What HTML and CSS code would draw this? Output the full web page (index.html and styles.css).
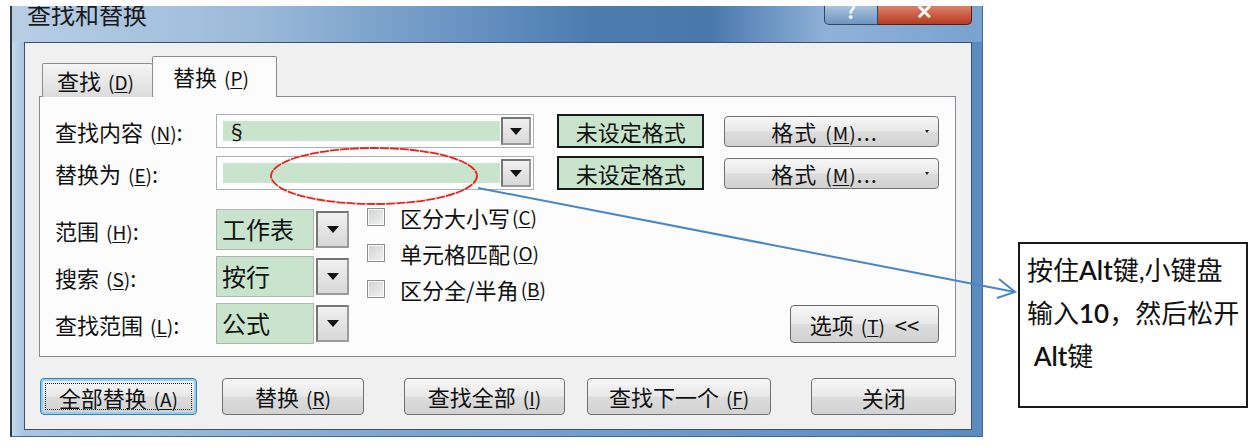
FILE: index.html
```html
<!DOCTYPE html>
<html lang="zh-CN">
<head>
    <meta charset="UTF-8">
    <title>查找和替换</title>
    <link rel="stylesheet" href="styles.css">
</head>
<body>
    <div class="stage">
        <div class="window">
            <div class="titlebar">
                <span class="title">查找和替换</span>
                <div class="caption">
                    <span class="cap help">?</span>
                    <span class="cap close">✕</span>
                </div>
            </div>

            <div class="client">
                <div class="tabs">
                    <span class="tab">查找 <span class="key">(<u>D</u>)</span></span>
                    <span class="tab active">替换 <span class="key">(<u>P</u>)</span></span>
                </div>

                <div class="panel">
                    <div class="row">
                        <label>查找内容 <span class="key">(<u>N</u>)</span>:</label>
                        <div class="combo"><span class="val">§</span><span class="drop"></span></div>
                        <span class="preview">未设定格式</span>
                        <button class="fmt">格式 <span class="key">(<u>M</u>)</span>...<i class="caret"></i></button>
                    </div>
                    <div class="row">
                        <label>替换为 <span class="key">(<u>E</u>)</span>:</label>
                        <div class="combo"><span class="val"></span><span class="drop"></span></div>
                        <span class="preview">未设定格式</span>
                        <button class="fmt">格式 <span class="key">(<u>M</u>)</span>...<i class="caret"></i></button>
                    </div>

                    <div class="options">
                        <div class="selects">
                            <div class="sel-row">
                                <label>范围 <span class="key">(<u>H</u>)</span>:</label>
                                <div class="select"><span class="val">工作表</span><span class="drop"></span></div>
                            </div>
                            <div class="sel-row">
                                <label>搜索 <span class="key">(<u>S</u>)</span>:</label>
                                <div class="select"><span class="val">按行</span><span class="drop"></span></div>
                            </div>
                            <div class="sel-row">
                                <label>查找范围 <span class="key">(<u>L</u>)</span>:</label>
                                <div class="select"><span class="val">公式</span><span class="drop"></span></div>
                            </div>
                        </div>
                        <div class="checks">
                            <label class="check"><span class="box"></span>区分大小写 <span class="key">(<u>C</u>)</span></label>
                            <label class="check"><span class="box"></span>单元格匹配 <span class="key">(<u>O</u>)</span></label>
                            <label class="check"><span class="box"></span>区分全/半角 <span class="key">(<u>B</u>)</span></label>
                        </div>
                        <button class="opt">选项 <span class="key">(<u>T</u>)</span> &nbsp;&lt;&lt;</button>
                    </div>
                </div>

                <div class="actions">
                    <button class="btn focus w-all"><span>全部替换 <span class="key">(<u>A</u>)</span></span></button>
                    <button class="btn w-rep">替换 <span class="key">(<u>R</u>)</span></button>
                    <button class="btn w-findall">查找全部 <span class="key">(<u>I</u>)</span></button>
                    <button class="btn w-next">查找下一个 <span class="key">(<u>F</u>)</span></button>
                    <button class="btn w-close">关闭</button>
                </div>
            </div>
        </div>

        <div class="note">
            按住<b>Alt</b>键,小键盘<br>
            输入<b>10</b>，然后松开<br>
            &nbsp;<b>Alt</b>键
        </div>

        <!-- marcas encima del dialogo: elipse roja y flecha azul -->
        <svg class="overlay" width="1257" height="447" viewBox="0 0 1257 447">
            <ellipse cx="374" cy="176" rx="103" ry="28" fill="none" stroke="#e8231d" stroke-width="1.8" stroke-dasharray="9 1"/>
            <line x1="478" y1="188" x2="1015" y2="292" stroke="#4a86c6" stroke-width="2"/>
            <polyline points="999,279 1015,292 997,298" fill="none" stroke="#4a86c6" stroke-width="2"/>
        </svg>
    </div>
</body>
</html>
```

FILE: styles.css
```css
*{
    box-sizing: border-box;
}

body{
    margin: 0;
    background: #fff;
    font-family: "Noto Sans CJK SC", sans-serif;
    color: #111;
}

.stage{
    position: relative;
    width: 1257px;
    height: 447px;
    display: flex;
    align-items: flex-start;
}

.key{
    font-size: 19px;
    margin-left: 2px;
    u{
        text-underline-offset: 2px;
    }
}

/* ventana */
.window{
    margin: 6px 0 0 10px;
    width: 973px;
    height: 431px;
    display: flex;
    flex-direction: column;
    overflow: hidden;
    background: linear-gradient(90deg, #c6d9ed 0, #a9c5e2 12px, #7fa6d0 40%, #5c8bc0 100%);
    border-left: 2px solid #2e3846;
    border-right: 1px solid #3d6aa0;
    border-bottom: 1px solid #3d6aa0;
}

.titlebar{
    height: 36px;
    flex-shrink: 0;
    display: flex;
    align-items: flex-start;
    background: linear-gradient(90deg, #b8cee5 0%, #9bbad9 25%, #6c96c4 45%, #4c7bb0 60%, #4a78ad 72%, #8fb2d8 84%, #7aa2cf 100%);

    .title{
        font-size: 24px;
        line-height: 24px;
        margin: -4px 0 0 15px;
        color: #1a1a1a;
    }
}

.caption{
    margin-left: auto;
    margin-right: 10px;
    display: flex;
    height: 19px;

    .cap{
        height: 19px;
        color: #fff;
        font-weight: bold;
        font-size: 20px;
        line-height: 10px;
        text-align: center;
        overflow: hidden;
    }
    .help{
        width: 54px;
        color: #f4f7fa;
        background: linear-gradient(#a7c2de, #6f95c0);
        border: 1px solid #33475f;
        border-top: 0;
        border-radius: 0 0 0 5px;
    }
    .close{
        width: 94px;
        background: linear-gradient(#de8068, #b73a22);
        border: 1px solid #5a1d14;
        border-top: 0;
        border-left: 0;
        border-radius: 0 0 5px 0;
    }
}

.client{
    flex: 1;
    margin: 0 10px 6px 12px;
    border: 1px solid #3f5168;
    background: #f0f0f0;
    padding: 14px 15px 14px 14px;
    display: flex;
    flex-direction: column;
}

/* pestañas */
.tabs{
    display: flex;
    align-items: flex-end;
    height: 40px;
    margin-left: 3px;
    margin-bottom: -1px;
    position: relative;
    z-index: 1;

    .tab{
        width: 111px;
        height: 34px;
        border: 1px solid #898c95;
        border-bottom: 0;
        border-radius: 2px 2px 0 0;
        background: linear-gradient(#f4f4f4, #dcdcdc);
        font-size: 22px;
        line-height: 32px;
        padding-left: 14px;
    }
    .active{
        width: 125px;
        height: 41px;
        margin-left: -1px;
        background: #fcfcfc;
        padding-left: 20px;
        line-height: 38px;
    }
}

.panel{
    height: 261px;
    border: 1px solid #898c95;
    background: #fcfcfc;
    padding: 17px 16px 0 15px;
}

label{
    font-size: 22px;
}

.drop{
    width: 30px;
    border: 2px solid #757575;
    border-right-color: #9a9a9a;
    border-bottom-color: #9a9a9a;
    background: linear-gradient(#f0f0f0, #d8d8d8);
    display: flex;
    justify-content: center;
    align-items: center;

    &::after{
        content: "";
        border-left: 6px solid transparent;
        border-right: 6px solid transparent;
        border-top: 7px solid #111;
    }
}

.row{
    display: flex;
    align-items: center;
    height: 34px;
    margin-bottom: 8px;

    > label{
        width: 161px;
    }
}

.combo{
    width: 319px;
    height: 34px;
    border: 1px solid #aeb0b6;
    background: #fff;
    display: flex;
    padding: 2px 2px 2px 6px;

    .val{
        flex: 1;
        background: #c9e4cc;
        margin: 4px 1px 4px 0;
        font-size: 20px;
        line-height: 22px;
        padding-left: 4px;
    }
}

.preview{
    margin-left: 23px;
    width: 147px;
    height: 34px;
    border: 2px solid #1a1a1a;
    background: #c9e4cc;
    font-size: 22px;
    line-height: 30px;
    text-align: center;
}

button{
    font-family: inherit;
    color: #111;
    cursor: pointer;
}

.fmt, .opt, .btn{
    border: 1px solid #707070;
    border-radius: 4px;
    background: linear-gradient(#f7f7f7 0%, #e9e9e9 48%, #dcdcdc 52%, #d2d2d2 100%);
    font-size: 22px;
    padding: 0;
}

.fmt{
    margin-left: 20px;
    width: 215px;
    height: 31px;
    line-height: 28px;
    position: relative;
    padding-right: 14px;
    letter-spacing: 1px;

    .caret{
        position: absolute;
        right: 9px;
        top: 13px;
        border-left: 2px solid transparent;
        border-right: 2px solid transparent;
        border-top: 3px solid #222;
    }
}

.options{
    display: flex;
    margin-top: 19px;
    height: 136px;
}

.sel-row{
    display: flex;
    align-items: center;
    height: 41px;
    margin-bottom: 6px;

    > label{
        width: 161px;
    }
}

.select{
    width: 133px;
    height: 41px;
    display: flex;
    gap: 2px;

    .val{
        flex: 1;
        background: #c9e4cc;
        border: 1px solid #b4b4b4;
        font-size: 24px;
        line-height: 38px;
        padding-left: 5px;
    }
    .drop{
        width: 33px;
        margin: 2px 0;
    }
}

.checks{
    margin-left: 18px;
    margin-top: -4px;
    display: flex;
    flex-direction: column;
    gap: 13px;
}

.check{
    display: flex;
    align-items: center;
    height: 23px;

    .box{
        width: 18px;
        height: 18px;
        border: 1px solid #8e8f8f;
        background: linear-gradient(135deg, #cfd0d1, #f4f4f4);
        box-shadow: inset 0 0 0 1px #f8f8f8;
        margin-right: 15px;
    }
}

.opt{
    margin-left: auto;
    align-self: flex-end;
    margin-bottom: 2px;
    width: 149px;
    height: 38px;
    border-color: #6a6a6a;
}

/* botones de abajo */
.actions{
    display: flex;
    margin-top: 21px;
    padding-left: 1px;
}

.btn{
    height: 37px;
    line-height: 34px;
}

.focus{
    border-color: #3c7fb1;
    box-shadow: inset 0 0 0 2px #8fd0f3;
    padding: 4px;

    > span{
        display: block;
        height: 100%;
        line-height: 26px;
        border: 1px dotted #222;
    }
}

.w-all{ width: 157px; }
.w-rep{ width: 143px; margin-left: 25px; }
.w-findall{ width: 161px; margin-left: 40px; }
.w-next{ width: 185px; margin-left: 22px; }
.w-close{ width: 145px; margin-left: 40px; }

/* cuadro de nota */
.note{
    margin: 242px 0 0 35px;
    width: 230px;
    height: 166px;
    border: 2px solid #1a1a1a;
    background: #fff;
    padding: 5px 2px 0 7px;
    font-family: Lato, "Noto Sans CJK SC", sans-serif;
    font-size: 26px;
    line-height: 43px;
    white-space: nowrap;
    overflow: hidden;

    b{
        font-weight: 600;
    }
}

.overlay{
    position: absolute;
    left: 0;
    top: 0;
    pointer-events: none;
}
```
